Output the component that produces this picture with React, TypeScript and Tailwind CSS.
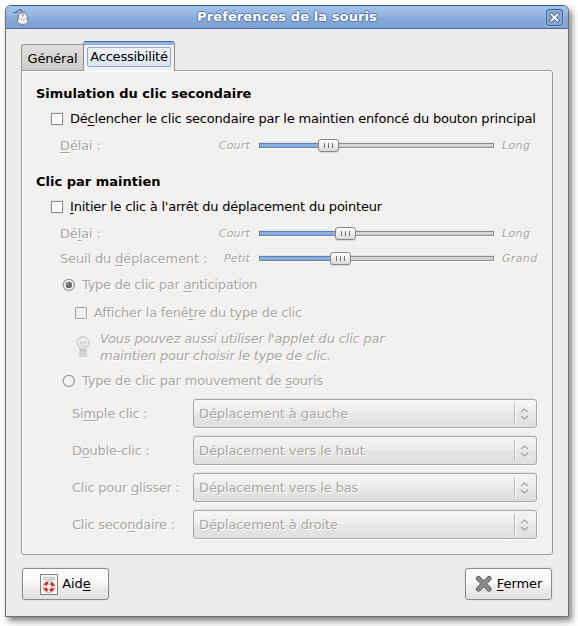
import React from "react";

const muted = "text-[#a9a7a4] [text-shadow:1px_1px_0_#ffffff]";

function Key({ children }: { children: React.ReactNode }) {
  return <span className="underline decoration-1 underline-offset-2">{children}</span>;
}

function Check({ disabled = false }: { disabled?: boolean }) {
  return (
    <span
      className={
        disabled
          ? "h-3 w-3 shrink-0 rounded-[1px] border border-[#a29f9b] bg-[#f2f1f0] shadow-[1px_1px_0_#ffffff]"
          : "h-3 w-3 shrink-0 border border-[#8d8883] bg-white shadow-[0_0_0_1px_#eae8e6]"
      }
    />
  );
}

function Radio({ on = false }: { on?: boolean }) {
  return (
    <svg className="h-[14px] w-[14px] shrink-0" viewBox="0 0 14 14">
      <circle cx="7.3" cy="7.5" r="5.7" fill="none" stroke="#fff" />
      <circle cx="6.8" cy="7" r="5.6" fill="#f5f4f3" stroke="#a19d99" strokeWidth="1.2" />
      {on && <circle cx="6.9" cy="7" r="3.2" fill="#6c6966" />}
      {on && <circle cx="6" cy="6" r="0.9" fill="#aaa7a3" />}
    </svg>
  );
}

function Slider({ value }: { value: number }) {
  return (
    <div className="relative -mt-px h-[13px] w-[235px] shrink-0 pt-[4px]">
      <div className="flex h-[5px] border border-[#8f8c88] bg-[#d6d4d2] shadow-[0_1px_0_#ffffff,0_-1px_0_#e6e4e2]">
        <div
          className="-my-px -ml-px h-[5px] border border-[#5c82b4] bg-[#8aafe0]"
          style={{ width: value + 4 }}
        />
      </div>
      <div
        className="absolute top-0 flex h-[13px] w-[21px] items-center justify-center gap-[3px] rounded-[3px] border border-[#8a8783] bg-linear-to-b from-white to-[#dddbd9] shadow-[0_1px_1px_#d8d6d4]"
        style={{ left: value }}
      >
        <i className="h-[5px] w-px bg-[#77736f]" />
        <i className="h-[5px] w-px bg-[#77736f]" />
        <i className="h-[5px] w-px bg-[#77736f]" />
      </div>
    </div>
  );
}

function SliderRow({ label, low, high, value, gap }: { label: React.ReactNode; low: string; high: string; value: number; gap: string }) {
  return (
    <div className={`flex h-6 items-center pl-[38px] ${gap} ${muted}`}>
      <span className="w-[150px] tracking-[-0.14px]">{label}</span>
      <span className="w-[40px] text-right text-[11px] tracking-[0.2px] italic">{low}</span>
      <div className="ml-[9px]">
        <Slider value={value} />
      </div>
      <span className="ml-2 text-[11px] tracking-[0.35px] italic">{high}</span>
    </div>
  );
}

function ComboRow({ label, value }: { label: React.ReactNode; value: string }) {
  return (
    <div className={`flex h-[29px] items-center pl-[50px] ${muted}`}>
      <span className="w-[121px] tracking-[-0.25px]">{label}</span>
      <div className="flex h-[29px] w-[344px] items-center rounded-[3px] border border-[#aaa8a5] bg-[linear-gradient(#f6f5f4,#eeedeb_50%,#e8e7e5_50%,#e1dfdd)] pl-[5px] shadow-[0_1px_0_#ffffff,0_-1px_0_#e5e3e1]">
        <span className="flex-1 tracking-[-0.11px]">{value}</span>
        <span className="h-[21px] w-[2px] border-l border-[#bab7b4] bg-white" />
        <svg className="mr-[7px] ml-[4px] h-3 w-[9px]" viewBox="0 0 9 12" fill="none" stroke="#a3a09c" strokeWidth="1.2">
          <path d="M1 4 4.5 1 8 4M1 8l3.5 3L8 8" />
        </svg>
      </div>
    </div>
  );
}

function MouseIcon() {
  return (
    <svg className="h-[18px] w-4" viewBox="0 0 16 18">
      <path d="M.5 4.500C3.500 5 4 4 5.500 2.500S9 1.500 9.500 5" fill="none" stroke="#566982" strokeWidth="1.2" />
      <path d="M5.500 8.500c0-5.500 8-5.500 8.500 0l1 4.500c.5 4.500-11 4.500-10.500 0z" fill="#f2f1ec" stroke="#77787a" />
      <path d="M5.500 10.500c2 1.500 6.500 1.500 8.500 0" fill="none" stroke="#b0b0ae" strokeWidth=".8" />
      <path d="M8 5.500 9.700 9.500 11.500 5.500z" fill="#86b1e0" />
    </svg>
  );
}

function BulbIcon() {
  return (
    <svg className="h-6 w-[16px]" viewBox="0 0 16 24">
      <ellipse cx="8.5" cy="20.7" rx="5.5" ry="1.5" fill="#dddcd9" />
      <path d="M5 14.5C5 11.500 2 11 2 7.200 2-.2 14-.2 14 7.200c0 3.800-3 4.300-3 7.300z" fill="#ecebe9" stroke="#c4c2bf" />
      <path d="M6.700 14V9.500L5 7l2 1 1-1 1 1 2-1-1.500 2.500V14" fill="none" stroke="#c8c6c3" strokeWidth=".8" />
      <path d="M5 15h6v4.500l-1.500 1.500h-3L5 19.500z" fill="#e1dfdc" stroke="#c5c3bf" strokeWidth=".8" />
      <path d="m4.500 17 7-1m-7 3 7-1" stroke="#c1bfba" strokeWidth=".8" />
    </svg>
  );
}

function HelpIcon() {
  return (
    <svg className="h-[21px] w-[18px]" viewBox="0 0 18 21">
      <path d="M.5.500h17v20H.500z" fill="#f8f8f6" stroke="#7f817d" />
      <path d="M3 3.500h12M3 5.500h12" stroke="#b8bab5" />
      <circle cx="9" cy="12.800" r="4.200" fill="none" stroke="#a5a5a5" strokeWidth="4" />
      <circle cx="9" cy="12.800" r="4.200" fill="none" stroke="#fafafa" strokeWidth="2.600" />
      <circle cx="9" cy="12.800" r="4.200" fill="none" stroke="#df2929" strokeWidth="2.600" strokeDasharray="4 2.597" strokeDashoffset="5.300" />
    </svg>
  );
}

function CrossIcon() {
  return (
    <svg className="h-[18px] w-[18px]" viewBox="0 0 18 18" strokeLinecap="round">
      <ellipse cx="9.500" cy="15.700" rx="8" ry="1.600" fill="#deddda" />
      <path d="m3.500 3.500 10.500 10.500m0-10.500L3.500 14" stroke="#5c5e5b" strokeWidth="5" />
      <path d="m3.500 3.500 10.500 10.500m0-10.500L3.500 14" stroke="#8a8c89" strokeWidth="3.300" />
    </svg>
  );
}

const button =
  "flex h-8 w-[87px] items-center justify-center rounded-[3px] border border-[#8f8c88] bg-[linear-gradient(#ffffff,#f8f8f7_50%,#f0efee_55%,#e4e2e0)] shadow-[0_0_0_1px_#e6e4e2]";

export default function App() {
  return (
    <div className="h-[626px] w-[578px] overflow-hidden bg-white pt-[5px] pl-[5px] font-['DejaVu_Sans',sans-serif] text-[13px] leading-4 whitespace-nowrap text-black">
      <div className="flex h-[612px] w-[564px] flex-col overflow-hidden rounded-t-[6px] border border-[#74726f] border-t-[#3c5d8b] bg-[#edeceb] shadow-[3px_4px_6px_rgba(0,0,0,0.5)]">
        <header className="flex h-[23px] shrink-0 items-center border-b border-[#416fa9] bg-[linear-gradient(#a5c2e9,#92b3e0_45%,#86aadb_50%,#7ba0d2)] pr-[5px] pl-[7px]">
          <MouseIcon />
          <h1 className="flex-1 pr-[1px] text-center font-bold tracking-[0.1px] text-white [text-shadow:1px_0_#5479ab,-1px_0_#5479ab,0_1px_#5479ab,0_-1px_#5479ab]">
            Préférences de la souris
          </h1>
          <button className="flex h-[17px] w-[17px] items-center justify-center rounded-[3px] border border-[#42668f] bg-[#86a9d7] shadow-[0_0_0_1px_#9ebbe2]">
            <svg className="h-[11px] w-[11px]" viewBox="0 0 11 11" strokeLinecap="square">
              <path d="m2.500 2.500 6 6m0-6-6 6" stroke="#42668f" strokeWidth="3.800" />
              <path d="m2.500 2.500 6 6m0-6-6 6" stroke="#fff" strokeWidth="2" />
            </svg>
          </button>
        </header>

        <nav className="relative z-10 -mb-px flex h-[42px] shrink-0 items-end pl-[15px]">
          <div className="mb-px flex h-[26px] w-[62px] items-center justify-center rounded-tl-[3px] border border-r-0 border-b-0 border-[#9c9996] bg-linear-to-b from-[#e0dfdd] to-[#cfcdcb] pt-[3px] tracking-[-0.2px]">
            Général
          </div>
          <div className="flex h-[30px] w-[92px] flex-col rounded-t-[3px] border-x border-t border-[#8f8c89] border-t-[#416fa9] bg-[#f2f1f0]">
            <div className="h-[3px] shrink-0 bg-[#8fb3e4]" />
            <div className="mx-[3px] mt-[2px] flex h-[20px] items-center justify-center rounded-[2px] border border-[#8ca9d0] bg-linear-to-b from-[#f0f2f5] to-[#dce4ef] tracking-[-0.23px]">
              Accessibilité
            </div>
          </div>
        </nav>

        <main className="ml-[15px] flex h-[485px] w-[532px] shrink-0 flex-col rounded-[3px] rounded-tl-none border border-[#a19e9a] bg-[#f2f1f0] pt-[13px] shadow-[inset_1px_1px_0_#ffffff]">
          <h2 className="h-[18px] pl-[14px] leading-[20px] font-bold">Simulation du clic secondaire</h2>
          <label className="mt-[5px] flex h-6 items-center pl-[29px]">
            <Check />
            <span className="ml-[7px] tracking-[-0.2px]">Dé<Key>c</Key>lencher le clic secondaire par le maintien enfoncé du bouton principal</span>
          </label>
          <SliderRow label={<><Key>D</Key>élai :</>} low="Court" high="Long" value={59} gap="mt-[3px]" />
          <h2 className="mt-[14px] h-[18px] pl-[14px] leading-[20px] font-bold">Clic par maintien</h2>
          <label className="mt-[5px] flex h-6 items-center pl-[29px]">
            <Check />
            <span className="ml-[7px] tracking-[-0.22px]"><Key>I</Key>nitier le clic à l'arrêt du déplacement du pointeur</span>
          </label>
          <SliderRow label={<>Dé<Key>l</Key>ai :</>} low="Court" high="Long" value={76} gap="mt-[3px]" />
          <SliderRow label={<>Seuil du <Key>d</Key>éplacement :</>} low="Petit" high="Grand" value={71} gap="mt-[1px]" />
          <label className={`mt-[2px] flex h-6 items-center pl-[40px] ${muted}`}>
            <Radio on />
            <span className="ml-[6px] tracking-[-0.25px]">Type de clic par <Key>a</Key>nticipation</span>
          </label>
          <label className={`mt-1 flex h-6 items-center pl-[53px] ${muted}`}>
            <Check disabled />
            <span className="ml-[7px] tracking-[-0.25px]">Afficher la fenê<Key>t</Key>re du type de clic</span>
          </label>
          <div className={`mt-[5px] flex h-[34px] pl-[53px] italic ${muted}`}>
            <div className="pt-[5px]"><BulbIcon /></div>
            <p className="ml-[9px] leading-[17px] tracking-[-0.17px]">
              Vous pouvez aussi utiliser l'applet du clic par
              <br />
              maintien pour choisir le type de clic.
            </p>
          </div>
          <label className={`mt-[5px] flex h-6 items-center pl-[40px] ${muted}`}>
            <Radio />
            <span className="ml-[6px] tracking-[-0.18px]">Type de clic par mouvement de <Key>s</Key>ouris</span>
          </label>
          <div className="mt-[6px] flex flex-col gap-2">
            <ComboRow label={<>Si<Key>m</Key>ple clic :</>} value="Déplacement à gauche" />
            <ComboRow label={<>D<Key>o</Key>uble-clic :</>} value="Déplacement vers le haut" />
            <ComboRow label={<>Clic pour <Key>g</Key>lisser :</>} value="Déplacement vers le bas" />
            <ComboRow label={<>Clic seco<Key>n</Key>daire :</>} value="Déplacement à droite" />
          </div>
        </main>

        <footer className="mt-[13px] flex justify-between pr-[16px] pl-[16px]">
          <button className={button}>
            <HelpIcon />
            <span className="ml-1 tracking-[-0.1px]">Aid<Key>e</Key></span>
          </button>
          <button className={button}>
            <CrossIcon />
            <span className="ml-1 tracking-[-0.1px]"><Key>F</Key>ermer</span>
          </button>
        </footer>
      </div>
    </div>
  );
}
